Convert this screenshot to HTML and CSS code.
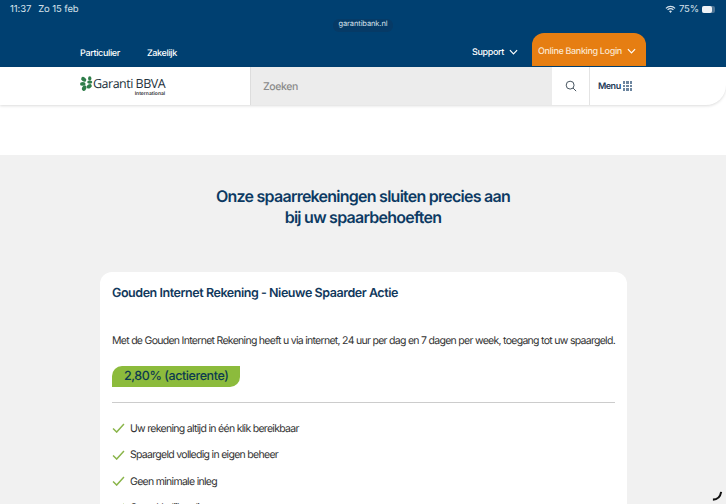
FILE: index.html
```html
<!DOCTYPE html>
<html lang="nl">
  <head>
    <meta charset="UTF-8" />
    <meta name="viewport" content="width=device-width, initial-scale=1.0" />
    <title>Garanti BBVA</title>
    <link rel="stylesheet" href="styles.css">
  </head>

  <body>
    <div class="topbar">
      <div class="status">
        <span class="status-left"><span>11:37</span><span>Zo 15 feb</span></span>
        <span class="status-right">
          <svg class="wifi" viewBox="0 0 12 9"><path d="M1 3.2a7 7 0 0 1 10 0M2.8 5a4.4 4.4 0 0 1 6.4 0" fill="none" stroke="#d7e2ec" stroke-width="1.3"/><path d="M4.4 6.5a2.2 2.2 0 0 1 3.2 0L6 8.3z" fill="#d7e2ec"/></svg>
          75%
          <span class="battery"><span class="battery-fill"></span></span>
        </span>
      </div>
      <div class="url"><span class="url-pill">garantibank.nl</span></div>
      <div class="nav">
        <div class="nav-left">
          <span>Particulier</span>
          <span>Zakelijk</span>
        </div>
        <div class="nav-right">
          <span class="support">Support
            <svg class="chev" viewBox="0 0 10 6"><path d="M1 1l4 4 4-4" fill="none" stroke="#fff" stroke-width="1.3"/></svg>
          </span>
          <span class="login">Online Banking Login
            <svg class="chev" viewBox="0 0 10 6"><path d="M1 1l4 4 4-4" fill="none" stroke="#fff" stroke-width="1.3"/></svg>
          </span>
        </div>
      </div>
    </div>

    <div class="header">
      <div class="logo">
        <svg class="clover" viewBox="0 0 14 16">
          <g fill="#2f7d4a">
            <ellipse cx="4" cy="3.5" rx="3" ry="2.2" transform="rotate(35 4 3.5)"/>
            <ellipse cx="10.5" cy="2.5" rx="1.8" ry="2.4"/>
            <ellipse cx="3" cy="8.5" rx="3" ry="2"/>
            <ellipse cx="10.5" cy="6.5" rx="2.8" ry="1.7"/>
            <ellipse cx="4.5" cy="13" rx="2.3" ry="3" transform="rotate(25 4.5 13)"/>
            <ellipse cx="10" cy="11" rx="2.9" ry="2.1" transform="rotate(-30 10 11)"/>
          </g>
        </svg>
        <div class="logo-text">
          <span class="logo-name">Garanti BBVA</span>
          <span class="logo-sub">International</span>
        </div>
      </div>
      <div class="search">Zoeken</div>
      <div class="search-btn">
        <svg class="loupe" viewBox="0 0 14 14"><circle cx="6" cy="6" r="4.6" fill="none" stroke="#3b4a57" stroke-width="1.1"/><path d="M9.4 9.4l3.6 3.6" stroke="#3b4a57" stroke-width="1.1"/></svg>
      </div>
      <div class="menu">Menu
        <span class="menu-grid">
          <i></i><i></i><i></i><i></i><i></i><i></i><i></i><i></i><i></i>
        </span>
      </div>
    </div>

    <div class="gap"></div>

    <main class="content">
      <h1>Onze spaarrekeningen sluiten precies aan<br />bij uw spaarbehoeften</h1>

      <section class="card">
        <h2>Gouden Internet Rekening - Nieuwe Spaarder Actie</h2>
        <p>Met de Gouden Internet Rekening heeft u via internet, 24 uur per dag en 7 dagen per week, toegang tot uw spaargeld.</p>
        <div class="rate">2,80% (actierente)</div>
        <hr />
        <ul class="checks">
          <li><svg viewBox="0 0 14 11"><path d="M1 6l4 4 8-9" fill="none" stroke="#8ab54a" stroke-width="1.6"/></svg>Uw rekening altijd in één klik bereikbaar</li>
          <li><svg viewBox="0 0 14 11"><path d="M1 6l4 4 8-9" fill="none" stroke="#8ab54a" stroke-width="1.6"/></svg>Spaargeld volledig in eigen beheer</li>
          <li><svg viewBox="0 0 14 11"><path d="M1 6l4 4 8-9" fill="none" stroke="#8ab54a" stroke-width="1.6"/></svg>Geen minimale inleg</li>
          <li><svg viewBox="0 0 14 11"><path d="M1 6l4 4 8-9" fill="none" stroke="#8ab54a" stroke-width="1.6"/></svg>Gemakkelijk online openen</li>
        </ul>
      </section>
    </main>

    <svg class="spinner" viewBox="0 0 12 12"><path d="M1 10.5c4.5 0 8-3 9-8.5" fill="none" stroke="#111" stroke-width="2.2"/></svg>
  </body>
</html>
```

FILE: styles.css
```css
html,
body {
  height: 504px;
  overflow: hidden;
}

body {
  margin: 0;
  position: relative;
  background-color: #fff;
  color: #333;
  font-family: "Inter", "Liberation Sans", sans-serif;
  text-rendering: geometricPrecision;
}

.topbar {
  background-color: #004071;
  color: #fff;
  height: 67px;
  display: flex;
  flex-direction: column;
}

.status {
  display: flex;
  justify-content: space-between;
  align-items: center;
  height: 19px;
  padding: 0 11px 0 10px;
  font-size: 9.5px;
  letter-spacing: -0.1px;
  color: #d7e2ec;
}

.status-left {
  display: flex;
  gap: 7px;
}

.status-right {
  display: flex;
  align-items: center;
  gap: 3px;
}

.wifi {
  width: 11px;
  height: 9px;
}

.battery {
  display: inline-block;
  width: 13px;
  height: 7px;
  border-radius: 2px;
  background-color: #4d7596;
}

.battery-fill {
  display: block;
  width: 10px;
  height: 7px;
  border-radius: 2px;
  background-color: #eef3f7;
}

.url {
  display: flex;
  justify-content: center;
  height: 12.5px;
}

.url-pill {
  background-color: #063a66;
  border-radius: 6px;
  padding: 0 6px;
  font-size: 7.5px;
  letter-spacing: -0.1px;
  line-height: 10px;
  color: #d7e2ec;
}

.nav {
  flex: 1;
  display: flex;
  justify-content: space-between;
  padding: 3px 80px 0;
  font-size: 9px;
  font-weight: 500;
  letter-spacing: -0.35px;
}

.nav-left {
  display: flex;
  gap: 27px;
  padding-top: 13px;
}

.nav-right {
  display: flex;
  align-items: flex-start;
  gap: 14px;
}

.support {
  padding-top: 12px;
  display: flex;
  gap: 5px;
  align-items: center;
}

.login {
  background-color: #e67e12;
  border-radius: 12px 12px 0 0;
  margin-top: -1.5px;
  height: 33px;
  width: 114px;
  box-sizing: border-box;
  padding: 3px 0 0 6px;
  display: flex;
  align-items: center;
  gap: 5px;
  color: #fbe6cf;
}

.chev {
  width: 9px;
  height: 6px;
}

.header {
  display: flex;
  height: 38px;
  align-items: stretch;
  border-bottom-right-radius: 20px;
  box-shadow: 0 1px 3px rgba(0, 0, 0, 0.14);
  background-color: #fff;
  position: relative;
}

.logo {
  width: 170px;
  padding-left: 80px;
  display: flex;
  align-items: center;
}

.clover {
  width: 13px;
  height: 17px;
  margin-bottom: 5px;
}

.logo-text {
  display: flex;
  flex-direction: column;
  align-items: flex-end;
  padding-top: 2px;
}

.logo-name {
  font-family: "Open Sans", sans-serif;
  font-size: 12.5px;
  line-height: 14px;
  letter-spacing: -0.5px;
  color: #24323d;
  white-space: nowrap;
}

.logo-sub {
  font-size: 5px;
  font-weight: 600;
  line-height: 7px;
  color: #333;
}

.search {
  width: 289px;
  background-color: #ececec;
  border-left: 1px solid #ddd;
  padding-left: 12px;
  display: flex;
  align-items: center;
  font-size: 10.5px;
  font-weight: 500;
  letter-spacing: -0.4px;
  color: #8a8a8a;
}

.search-btn {
  width: 37px;
  border-right: 1px solid #e4e4e4;
  display: flex;
  align-items: center;
  justify-content: center;
}

.loupe {
  width: 12px;
  height: 12px;
}

.menu {
  padding-left: 8px;
  display: flex;
  align-items: center;
  gap: 2px;
  font-size: 9px;
  font-weight: 600;
  letter-spacing: -0.5px;
  color: #1c3a57;
}

.menu-grid {
  display: grid;
  grid-template-columns: repeat(3, 2.5px);
  gap: 1px;
}

.menu-grid i {
  display: block;
  width: 2.5px;
  height: 2.5px;
  background-color: #6d86a0;
}

.gap {
  height: 50px;
}

.content {
  background-color: #f1f1f1;
  height: 349px;
  padding-top: 31px;
  box-sizing: border-box;
}

h1 {
  margin: 0;
  text-align: center;
  font-size: 16px;
  font-weight: 600;
  letter-spacing: -0.75px;
  line-height: 21px;
  color: #0c3a63;
}

.card {
  background-color: #fff;
  margin: 44px 99px 0 100px;
  border-radius: 12px;
  padding: 14px 12px 0;
}

h2 {
  margin: 0;
  font-size: 12.5px;
  font-weight: 600;
  letter-spacing: -0.45px;
  line-height: 16px;
  color: #12395c;
}

.card p {
  margin: 32px 0 0;
  font-size: 10.5px;
  letter-spacing: -0.71px;
  line-height: 14px;
  color: #333;
  white-space: nowrap;
}

.rate {
  display: inline-block;
  margin-top: 18px;
  background-color: #8cbb3c;
  border-radius: 10px 0 10px 0;
  padding: 0 12px;
  font-size: 12.5px;
  font-weight: 500;
  letter-spacing: -0.42px;
  line-height: 21px;
  color: #0c3a4f;
}

hr {
  border: 0;
  border-top: 1px solid #ccc;
  margin: 15px 0 0;
}

.checks {
  list-style: none;
  margin: 12px 0 0;
  padding: 0;
}

.checks li {
  display: flex;
  align-items: center;
  height: 26.5px;
  font-size: 10.5px;
  letter-spacing: -0.7px;
  color: #333;
}

.checks svg {
  width: 13px;
  height: 10px;
  margin-right: 5px;
}

.spinner {
  position: absolute;
  right: 3px;
  bottom: 3px;
  width: 11px;
  height: 11px;
}
```
